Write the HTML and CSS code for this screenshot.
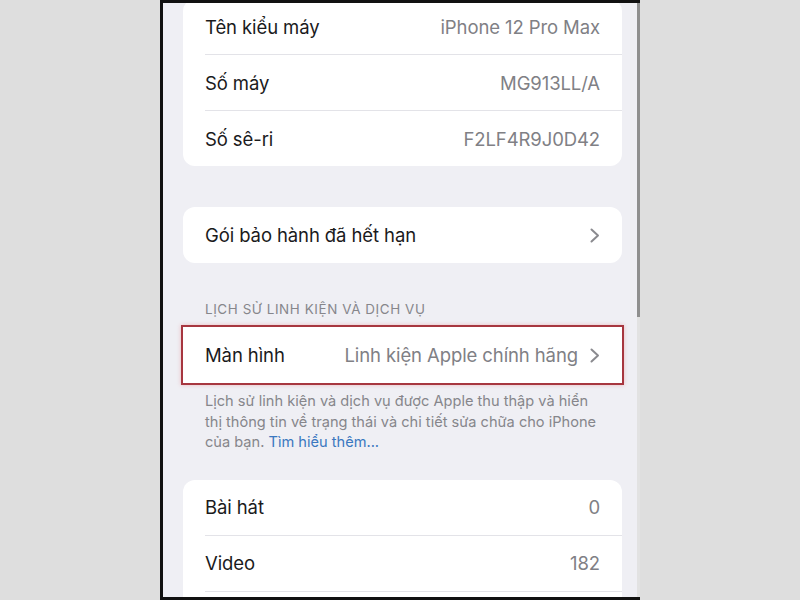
FILE: index.html
```html
<!DOCTYPE html>
<html lang="vi">
<head>
<meta charset="utf-8">
<title>Giới thiệu</title>
<link rel="stylesheet" href="styles.css">
</head>
<body>
<div class="frame">
  <div class="screen">
    <div class="card card-top">
      <div class="row"><span class="label">Tên kiểu máy</span><span class="value">iPhone 12 Pro Max</span></div>
      <div class="sep"></div>
      <div class="row"><span class="label">Số máy</span><span class="value">MG913LL/A</span></div>
      <div class="sep"></div>
      <div class="row"><span class="label">Số sê-ri</span><span class="value">F2LF4R9J0D42</span></div>
    </div>

    <div class="card card-warranty">
      <div class="row"><span class="label">Gói bảo hành đã hết hạn</span>
        <svg class="chev" viewBox="0 0 10 15" width="10" height="15"><polyline points="1.5,1.5 8,7.5 1.5,13.5"/></svg>
      </div>
    </div>

    <div class="section-header">LỊCH SỬ LINH KIỆN VÀ DỊCH VỤ</div>
    <div class="card highlight">
      <div class="row"><span class="label">Màn hình</span>
        <span class="value-group"><span class="value">Linh kiện Apple chính hãng</span>
        <svg class="chev" viewBox="0 0 10 15" width="10" height="15"><polyline points="1.5,1.5 8,7.5 1.5,13.5"/></svg></span>
      </div>
    </div>
    <p class="footer">Lịch sử linh kiện và dịch vụ được Apple thu thập và hiển thị thông tin về trạng thái và chi tiết sửa chữa cho iPhone của bạn. <span class="link">Tìm hiểu thêm...</span></p>

    <div class="card card-media">
      <div class="row"><span class="label">Bài hát</span><span class="value">0</span></div>
      <div class="sep"></div>
      <div class="row"><span class="label">Video</span><span class="value">182</span></div>
      <div class="sep"></div>
      <div class="row row-empty"></div>
    </div>
  </div>
  <div class="scrollbar"><div class="thumb"></div></div>
</div>
</body>
</html>
```

FILE: styles.css
```css
html, body {
  margin: 0;
  padding: 0;
}
body {
  width: 800px;
  height: 600px;
  background: #dedede;
  font-family: Inter, "Noto Sans", "DejaVu Sans", sans-serif;
  overflow: hidden;
}
.frame {
  margin-left: 160px;
  width: 477px;
  height: 594px;
  border-top: 3px solid #111;
  border-bottom: 3px solid #111;
  border-left: 3px solid #111;
  display: flex;
  background: #efeff4;
}
.screen {
  flex: 1;
  height: 594px;
  overflow: hidden;
  display: flex;
  flex-direction: column;
}
.scrollbar {
  width: 3px;
  background: #e2e2e2;
}
.thumb {
  height: 314px;
  background: #8f8f8f;
}
.card {
  background: #fff;
  border-radius: 12px;
  margin: 0 15px 0 20px;
  flex-shrink: 0;
}
.card-top {
  margin-top: -4px;
}
.row {
  height: 55px;
  padding: 0 22px;
  display: flex;
  align-items: center;
  justify-content: space-between;
}
.sep {
  height: 1px;
  margin-left: 22px;
  background: #e3e3e8;
}
.label {
  font-size: 18.5px;
  color: #1a1a1c;
  letter-spacing: -0.1px;
}
.value {
  font-size: 18.5px;
  color: #808085;
  letter-spacing: -0.1px;
}
.value-group {
  display: flex;
  align-items: center;
  gap: 12px;
}
.chev {
  display: block;
}
.chev polyline {
  fill: none;
  stroke: #8a8a8f;
  stroke-width: 2;
  stroke-linecap: round;
  stroke-linejoin: round;
}
.card-warranty {
  margin-top: 41px;
}
.card-warranty .row {
  height: 56px;
}
.section-header {
  margin: 38px 0 0 42px;
  font-size: 13.4px;
  line-height: 16px;
  color: #86868b;
  letter-spacing: 0.6px;
}
.highlight {
  margin-top: 10px;
  border-radius: 0;
  outline: 2px solid #a7363f;
  box-shadow: 0 0 4px 2px rgba(235, 120, 125, 0.45);
}
.highlight .row {
  height: 56px;
}
.footer {
  margin: 8px 30px 0 42px;
  font-size: 14.6px;
  line-height: 20.5px;
  color: #86868b;
}
.link {
  color: #3a78c0;
}
.card-media {
  margin-top: 27px;
}
```
